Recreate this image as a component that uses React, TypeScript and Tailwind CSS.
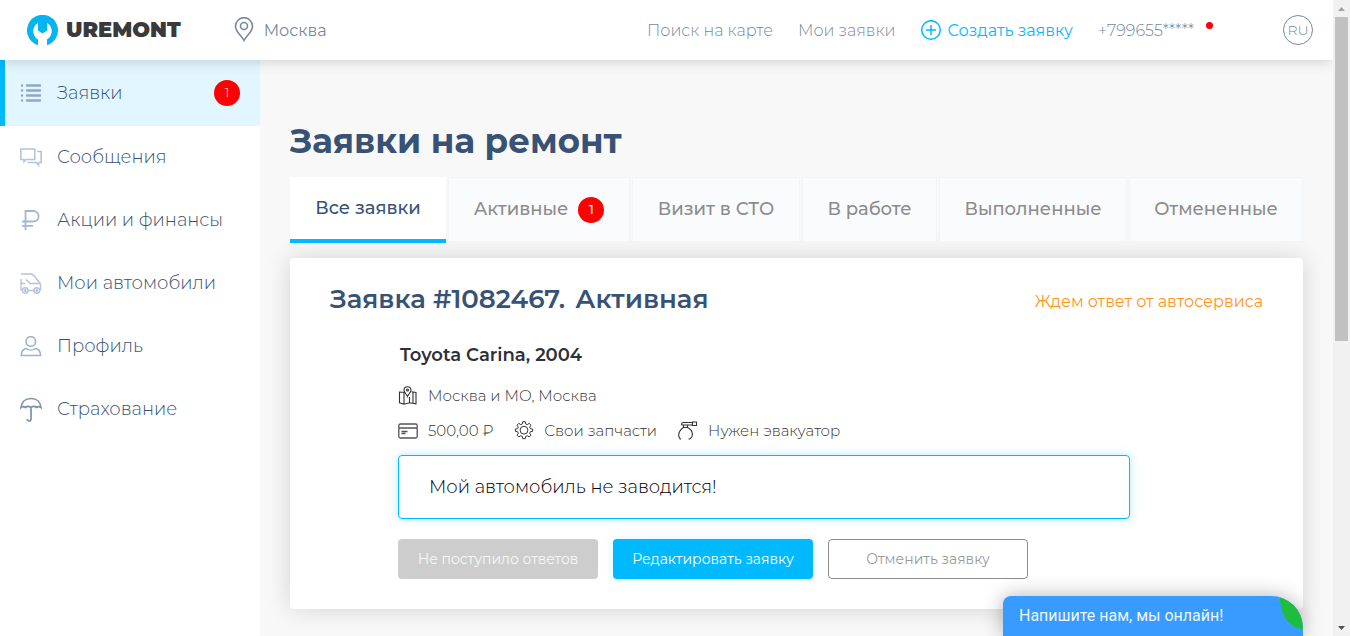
import type { ReactNode } from "react";

const MENU: { label: string; icon: ReactNode; badge?: number }[] = [
  {
    label: "Заявки",
    badge: 1,
    icon: (
      <svg viewBox="0 0 22 22" className="size-[22px]" fill="none" stroke="#8fa8c6" strokeWidth="2.400" strokeLinecap="round">
        <path d="M7 3.500H20M7 8.500H20M7 13.500H20M7 18.500H20" />
        <path d="M2 3.500h.1M2 8.500h.1M2 13.500h.1M2 18.500h.1" />
      </svg>
    ),
  },
  {
    label: "Сообщения",
    icon: (
      <svg viewBox="0 0 22 22" className="size-[22px]" fill="none" stroke="#b4c4da" strokeWidth="1.600">
        <path d="M.8 2h14v10.500H6L4 14.700v-2.200H.8z" />
        <path d="M17 4.500h4.200v11h-2.700V18L16 15.500H7.500" />
      </svg>
    ),
  },
  {
    label: "Акции и финансы",
    icon: (
      <svg viewBox="0 0 22 22" className="size-[22px]" fill="none" stroke="#a3b7d0" strokeWidth="1.800">
        <path d="M5.500 20V1h7.500c7.500 0 7.500 10.500 0 10.500H2M2 15.800h11" />
      </svg>
    ),
  },
  {
    label: "Мои автомобили",
    icon: (
      <svg viewBox="0 0 22 22" className="size-[22px]" fill="none" stroke="#b4c4da" strokeWidth="1.400">
        <path d="M1 1h10.500c3 1.500 5 4.500 7 7.500 1.500.8 2 1.500 2 3v5.500h-1.300M1 6v11h1.500M8 17.500h6M6 6.500l4 4h9.500M1 10.500h4" />
        <circle cx="5.200" cy="17.500" r="2.800" />
        <circle cx="5.200" cy="17.500" r=".8" />
        <circle cx="16.800" cy="17.500" r="2.800" />
        <circle cx="16.800" cy="17.500" r=".8" />
      </svg>
    ),
  },
  {
    label: "Профиль",
    icon: (
      <svg viewBox="0 0 22 22" className="size-[22px]" fill="none" stroke="#9db2ce" strokeWidth="1.600">
        <circle cx="10.800" cy="5.500" r="4.800" />
        <path d="M6.500 12.500c-3.500.5-5.200 3-5.300 7h19.400c-.1-4-1.800-6.500-5.300-7-2.500 2-6.300 2-8.800 0z" />
      </svg>
    ),
  },
  {
    label: "Страхование",
    icon: (
      <svg viewBox="0 0 22 26" className="h-[26px] w-[22px]" fill="none" stroke="#7d90ad" strokeWidth="1.700">
        <path d="M1 10.500C1.500 5 5.500 1.500 11 1.500S20.500 5 21 10.500c-1.500-1.300-3-1.300-4.500 0-1.500-1.300-3.500-1.300-5.500 0-2-1.300-4-1.300-5.500 0-1.500-1.300-3-1.300-4.500 0zM11 10.500v11.200c0 3-3.800 3-3.800.2" />
      </svg>
    ),
  },
];

const TABS: { label: string; badge?: number }[] = [
  { label: "Все заявки" },
  { label: "Активные", badge: 1 },
  { label: "Визит в СТО" },
  { label: "В работе" },
  { label: "Выполненные" },
  { label: "Отмененные" },
];

function Badge({ value }: { value: number }) {
  return (
    <span className="flex size-[26px] shrink-0 items-center justify-center rounded-full bg-[#ff0000] text-[13px] text-white">
      {value}
    </span>
  );
}

function Header() {
  return (
    <header className="relative z-10 flex h-[60px] shrink-0 items-center bg-white pr-5 pl-[27px] text-[16px] text-[#7589a2] shadow-[0_0_14px_rgba(0,0,0,0.2)]">
      <a href="#" className="flex items-center gap-2">
        <svg viewBox="0 0 31 31" className="size-[31px]" fill="#00b5f1">
          <path d="M11 30.200A15.500 15.500 0 1 1 20 30.200V24.500c6.500-4 6.200-13 .2-16.500V15.500L15.500 18.500 11 15.500V8c-6.200 3.500-6.500 12.500 0 16.500z" />
        </svg>
        <span className="text-[21px] font-black text-[#3a3a3c]">UREMONT</span>
      </a>
      <a href="#" className="ml-[53px] flex items-center gap-[10px]">
        <svg viewBox="0 0 20 26" className="h-[26px] w-[20px]" fill="none" stroke="#7589a2" strokeWidth="1.600">
          <path d="M10 23.500C7.500 18.500 1.500 15 1.500 9.200a8.500 8.500 0 0 1 17 0c0 5.800-6 9.300-8.500 14.300z" />
          <circle cx="10" cy="9" r="3.500" />
        </svg>
        <span className="pt-[2px]">Москва</span>
      </a>
      <nav className="ml-auto flex items-center gap-[25px] pt-[2px] font-light">
        <a href="#">Поиск на карте</a>
        <a href="#">Мои заявки</a>
        <a href="#" className="flex items-center gap-[5px] font-normal text-[#00b9ff]">
          <svg viewBox="0 0 22 22" className="size-[22px]" fill="none" stroke="#00b9ff" strokeWidth="1.500">
            <circle cx="11" cy="10" r="9.300" />
            <path d="M11 5v10M6 10h10" />
          </svg>
          Создать заявку
        </a>
        <a href="#" className="flex items-start gap-[12px]">
          +799655*****
          <span className="mt-[3px] size-[7px] rounded-full bg-[#ff0000]" />
        </a>
      </nav>
      <button className="ml-[70px] size-[30px] rounded-full border border-[#7589a2] text-[14px] font-light">RU</button>
    </header>
  );
}

function Sidebar() {
  return (
    <nav className="w-[260px] shrink-0 bg-white text-[18px] font-light text-[#375275]">
      {MENU.map((item, i) => (
        <a
          key={item.label}
          href="#"
          className={
            i === 0
              ? "flex h-[66px] items-center gap-[15px] border-l-5 border-[#00b9ff] bg-[#e2f6ff] pr-5 pl-[15px]"
              : "flex h-[63px] items-center gap-[15px] px-5"
          }
        >
          {item.icon}
          <span className="flex-1">{item.label}</span>
          {item.badge && <Badge value={item.badge} />}
        </a>
      ))}
    </nav>
  );
}

function Tabs() {
  return (
    <div role="tablist" className="mt-[15px] grid grid-cols-[156fr_182fr_168fr_135fr_188fr_174fr] items-start gap-[2px] text-[18px] font-medium">
      {TABS.map((tab, i) => (
        <button
          key={tab.label}
          role="tab"
          aria-selected={i === 0}
          className={
            i === 0
              ? "h-[66px] border-b-4 border-[#00b9ff] bg-white text-[#375275]"
              : "flex h-[65px] items-center justify-center gap-[10px] border border-[#f3f4f5] bg-[#fafbfd] text-[#8c8c8c]"
          }
        >
          {tab.label}
          {tab.badge && <Badge value={tab.badge} />}
        </button>
      ))}
    </div>
  );
}

function RequestCard() {
  return (
    <section className="mt-[15px] rounded bg-white px-10 pt-[22px] pb-[30px] shadow-[0_0_24px_rgba(0,0,0,0.15)]">
      <div className="flex items-center justify-between">
        <h2 className="flex gap-[10px] text-[26px] leading-[38px] font-semibold text-[#375275]">
          <span>Заявка #1082467.</span>
          <span>Активная</span>
        </h2>
        <span className="pt-[6px] text-[16px] text-[#ff951c]">Ждем ответ от автосервиса</span>
      </div>
      <div className="mt-6 ml-[68px] text-[15px] font-light text-[#333]">
        <h3 className="pl-[2px] text-[18px] leading-[26px] font-semibold text-[#2f2f37]">Toyota Carina, 2004</h3>
        <div className="mt-[15px] flex h-[26px] items-center gap-[10px]">
          <svg viewBox="0 0 20 20" className="size-5" fill="none" stroke="#333" strokeWidth="1.100">
            <path d="M7 6.500 1.500 6v10.800l4.500 1.400 5.500-1.400 6.500 1V6.500l-4.500-.8M6 7v11M11.500 11v6M15 6.500v10.800" />
            <path d="M9.500 10.500C8.500 8 6 6.500 6 4.200a3.500 3.500 0 0 1 7 0c0 2.300-2.500 3.800-3.500 6.300z" />
            <circle cx="9.500" cy="4" r="1" />
          </svg>
          Москва и МО, Москва
        </div>
        <div className="mt-[9px] flex h-[26px] items-center gap-[21px]">
          <span className="flex items-center gap-[10px]">
            <svg viewBox="0 0 20 20" className="size-5" fill="none" stroke="#555" strokeWidth="1.300">
              <rect x=".8" y="3" width="18.400" height="14" rx="1.500" />
              <path d="M1 7h18M3.500 10.500h6M3.500 12.500h4" />
            </svg>
            500,00 ₽
          </span>
          <span className="flex items-center gap-[10px]">
            <svg viewBox="0 -1 22 22" className="size-5" fill="none" stroke="#333" strokeWidth="1.100" strokeLinejoin="round">
              <path d="M9.600-.2h2.800l.5 2.500 1.700.7 2.100-1.400 2 2-1.400 2.100.7 1.700 2.500.5v2.400l-2.500.5-.7 1.700 1.400 2.100-2 2-2.100-1.400-1.700.7-.5 2.500H9.600l-.5-2.500-1.700-.7-2.100 1.400-2-2 1.400-2.100-.7-1.700-2.500-.5V7.900L4 7.400l.7-1.700-1.400-2.100 2-2L7.400 3l1.700-.7z" />
              <circle cx="11" cy="9.100" r="4.300" />
            </svg>
            Свои запчасти
          </span>
          <span className="flex items-center gap-[10px]">
            <svg viewBox="0 0 20 20" className="size-5" fill="none" stroke="#333" strokeWidth="1.100">
              <path d="M14.500 1h4v3.500h-4zM14.500 1.500H5c-1.500 0-2 2.500-.5 2.500h10M5.500 4v2.500h4V4M5.500 6.500C2.500 8.500.3 12 .8 15.500l1.500 2.500M9.500 6.500c4 2 5.500 5.500 4.500 9l-2 2.500M1.500 18h1.500M10.500 18h1.500" />
            </svg>
            Нужен эвакуатор
          </span>
        </div>
        <input
          aria-label="Описание заявки"
          defaultValue="Мой автомобиль не заводится!"
          readOnly
          className="mt-[11px] block h-16 w-full max-w-[732px] rounded border border-[#00b9ff] bg-white px-[30px] text-[18px] text-black shadow-[0_0_10px_rgba(0,185,255,0.3)] outline-none"
        />
        <div className="mt-5 flex gap-[15px] text-[14px] font-normal">
          <button className="h-10 w-[200px] rounded bg-[#cdcdcd] text-[#f8f8f8]">Не поступило ответов</button>
          <button className="h-10 w-[200px] rounded bg-[#00b9ff] text-white shadow-[0_0_10px_rgba(0,185,255,0.15)]">Редактировать заявку</button>
          <button className="h-10 w-[200px] rounded border border-[#8c8c8c] bg-white text-[#999]">Отменить заявку</button>
        </div>
      </div>
    </section>
  );
}

function Scrollbar() {
  return (
    <div aria-hidden="true" className="flex w-[17px] shrink-0 flex-col items-center bg-[#f1f1f1]">
      <svg viewBox="0 0 17 17" className="size-[17px]" fill="#a3a3a3">
        <path d="M5 11h7L8.500 7z" />
      </svg>
      <div className="h-[51%] w-[13px] bg-[#c1c1c1]" />
      <svg viewBox="0 0 17 17" className="mt-auto size-[17px]" fill="#505050">
        <path d="M5 7h7l-3.500 4z" />
      </svg>
    </div>
  );
}

export default function App() {
  return (
    <div className="flex h-screen overflow-hidden font-[Montserrat,Inter,sans-serif]">
      <div className="relative flex min-w-0 flex-1 flex-col overflow-hidden bg-[#f8f8f8]">
        <Header />
        <div className="flex min-h-0 flex-1">
          <Sidebar />
          <main className="min-w-0 flex-1 px-[30px] pt-[60px]">
            <h1 className="text-[34px] leading-[42px] font-bold text-[#375275]">Заявки на ремонт</h1>
            <Tabs />
            <RequestCard />
          </main>
        </div>
        <button className="absolute right-[30px] bottom-0 z-20 flex h-10 w-[300px] items-center overflow-hidden rounded-t-lg rounded-tr-[32px] bg-[#389bff] pl-4 font-[Roboto,sans-serif] text-[16px] font-normal text-[#eef6ff] shadow-[0_0_20px_rgba(0,0,0,0.3)]">
          <span className="flex-1 text-left">Напишите нам, мы онлайн!</span>
          <svg viewBox="0 0 23 33" className="h-[33px] w-[23px] self-start" fill="#1dbe3c">
            <path d="M0 0C14 1 23 14 23 33 9 32 0 19 0 0z" />
          </svg>
        </button>
      </div>
      <Scrollbar />
    </div>
  );
}
